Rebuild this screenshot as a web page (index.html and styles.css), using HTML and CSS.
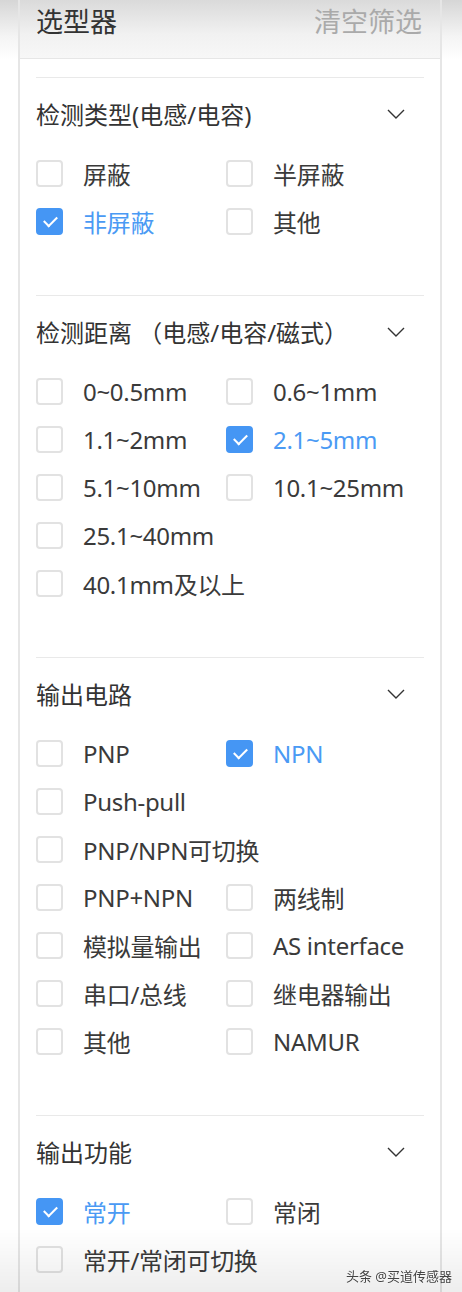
FILE: index.html
```html
<!DOCTYPE html>
<html lang="zh-CN">
<head>
  <meta charset="UTF-8">
  <title>选型器</title>
  <link rel="stylesheet" href="styles.css">
</head>
<body>
<div class="panel">
  <div class="panel-head">
    <span class="panel-title">选型器</span>
    <span class="clear-link">清空筛选</span>
  </div>

  <div class="panel-body">
    <!-- 检测类型 -->
    <div class="filter">
      <div class="filter-head">
        <span>检测类型(电感/电容)</span>
        <svg class="chevron" width="18" height="10" viewBox="0 0 18 10"><path d="M1 1 L9 9 L17 1" fill="none" stroke="#333" stroke-width="1.4"/></svg>
      </div>
      <div class="options">
        <label class="option"><span class="box"></span>屏蔽</label>
        <label class="option"><span class="box"></span>半屏蔽</label>
        <label class="option checked"><span class="box"></span>非屏蔽</label>
        <label class="option"><span class="box"></span>其他</label>
      </div>
    </div>

    <!-- 检测距离 -->
    <div class="filter">
      <div class="filter-head">
        <span>检测距离 （电感/电容/磁式）</span>
        <svg class="chevron" width="18" height="10" viewBox="0 0 18 10"><path d="M1 1 L9 9 L17 1" fill="none" stroke="#333" stroke-width="1.4"/></svg>
      </div>
      <div class="options">
        <label class="option"><span class="box"></span>0~0.5mm</label>
        <label class="option"><span class="box"></span>0.6~1mm</label>
        <label class="option"><span class="box"></span>1.1~2mm</label>
        <label class="option checked"><span class="box"></span>2.1~5mm</label>
        <label class="option"><span class="box"></span>5.1~10mm</label>
        <label class="option"><span class="box"></span>10.1~25mm</label>
        <label class="option full"><span class="box"></span>25.1~40mm</label>
        <label class="option full"><span class="box"></span>40.1mm及以上</label>
      </div>
    </div>

    <!-- 输出电路 -->
    <div class="filter">
      <div class="filter-head">
        <span>输出电路</span>
        <svg class="chevron" width="18" height="10" viewBox="0 0 18 10"><path d="M1 1 L9 9 L17 1" fill="none" stroke="#333" stroke-width="1.4"/></svg>
      </div>
      <div class="options">
        <label class="option"><span class="box"></span>PNP</label>
        <label class="option checked"><span class="box"></span>NPN</label>
        <label class="option full"><span class="box"></span>Push-pull</label>
        <label class="option full"><span class="box"></span>PNP/NPN可切换</label>
        <label class="option"><span class="box"></span>PNP+NPN</label>
        <label class="option"><span class="box"></span>两线制</label>
        <label class="option"><span class="box"></span>模拟量输出</label>
        <label class="option"><span class="box"></span>AS interface</label>
        <label class="option"><span class="box"></span>串口/总线</label>
        <label class="option"><span class="box"></span>继电器输出</label>
        <label class="option"><span class="box"></span>其他</label>
        <label class="option"><span class="box"></span>NAMUR</label>
      </div>
    </div>

    <!-- 输出功能 -->
    <div class="filter">
      <div class="filter-head">
        <span>输出功能</span>
        <svg class="chevron" width="18" height="10" viewBox="0 0 18 10"><path d="M1 1 L9 9 L17 1" fill="none" stroke="#333" stroke-width="1.4"/></svg>
      </div>
      <div class="options">
        <label class="option checked"><span class="box"></span>常开</label>
        <label class="option"><span class="box"></span>常闭</label>
        <label class="option full"><span class="box"></span>常开/常闭可切换</label>
      </div>
    </div>
  </div>
</div>

<div class="bottom-shade"></div>
<div class="watermark">头条 @买道传感器</div>
</body>
</html>
```

FILE: styles.css
```css
body {
  margin: 0;
  font-family: "Noto Sans", "Noto Sans CJK SC", sans-serif;
  color: #3a3a3a;
  background: linear-gradient(#d6d6d6 0, #f4f4f4 36px, #fff 60px) no-repeat, #fff;
  height: 1292px;
  overflow: hidden;
}
.panel {
  margin-left: 18px;
  width: 424px;
  box-sizing: border-box;
  border-left: 2px solid #e6e6e6;
  border-right: 2px solid #e6e6e6;
  background: #fff;
  min-height: 1292px;
}
.panel-head {
  height: 58px;
  display: flex;
  justify-content: space-between;
  align-items: flex-start;
  padding: 0 18px 0 16px;
  line-height: 43px;
  border-bottom: 1px solid #e6e6e6;
  background: linear-gradient(#dadada 0, #f1f1f1 34px, #f7f7f7 58px);
}
.panel-title {
  font-size: 27px;
  color: #333;
}
.clear-link {
  font-size: 27px;
  color: #aaa;
}
.panel-body {
  padding: 18px 16px 0;
}
.filter {
  border-top: 1px solid #e9e9e9;
  padding-bottom: 50px;
}
.filter-head {
  height: 71px;
  display: flex;
  align-items: center;
  justify-content: space-between;
  font-size: 24px;
  color: #333;
}
.chevron {
  margin-right: 19px;
}
.options {
  display: grid;
  grid-template-columns: 190px 1fr;
}
.option {
  height: 48px;
  display: flex;
  align-items: center;
  font-size: 24px;
  letter-spacing: -0.3px;
  color: #3a3a3a;
  white-space: nowrap;
}
.option.full {
  grid-column: 1 / -1;
}
.box {
  width: 27px;
  height: 27px;
  box-sizing: border-box;
  border: 2px solid #e2e2e2;
  border-radius: 4px;
  margin-right: 20px;
  flex-shrink: 0;
  position: relative;
}
.option.checked {
  color: #4a9af4;
}
.option.checked .box {
  background: #4596f4;
  border-color: #4596f4;
}
.option.checked .box::after {
  content: "";
  position: absolute;
  left: 6px;
  top: 6px;
  width: 11px;
  height: 6px;
  border-left: 2px solid #fff;
  border-bottom: 2px solid #fff;
  transform: rotate(-45deg);
}
.bottom-shade {
  position: fixed;
  left: 0;
  right: 0;
  bottom: 0;
  height: 64px;
  background: linear-gradient(rgba(0, 0, 0, 0), rgba(0, 0, 0, 0.07));
  pointer-events: none;
}
.watermark {
  position: fixed;
  right: 10px;
  bottom: 7px;
  font-size: 13px;
  color: #444;
  text-shadow: 0 0 2px #fff;
}
```
